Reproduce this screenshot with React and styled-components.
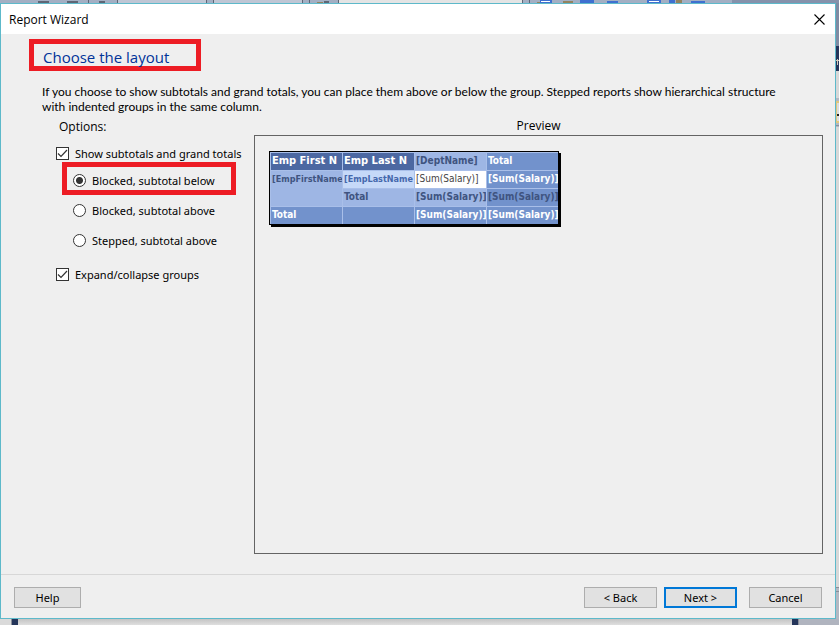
import React, { useState } from "react";
import styled, { createGlobalStyle, css } from "styled-components";

const GlobalStyle = createGlobalStyle`
  *, *::before, *::after { box-sizing: border-box; }
  body { margin: 0; background: #b4bac6; }
  body, button, input { font-family: "Noto Sans", "Open Sans", sans-serif; font-size: 11px; color: #000; }
`;

const Desktop = styled.div`
  display: grid;
  grid-template: 3px 1fr 6px / 1fr 3px;
  min-height: 100vh;
  overflow: hidden;
`;

const ToolbarEdge = styled.svg`
  display: block;
  grid-column: 1 / -1;
  width: 839px;
  height: 3px;
`;

const SideEdge = styled.svg`
  display: block;
  width: 3px;
  height: 616px;
`;

const BottomEdge = styled.div`
  grid-column: 1 / -1;
  display: flex;
  justify-content: space-between;
  padding: 0 40px 0 11px;
  background: linear-gradient(90deg, #dadada 11px, transparent 11px, transparent calc(100% - 40px), #b0b4bf calc(100% - 40px)),
    linear-gradient(#c4c4c4, #dfdfdf);
`;

const Post = styled.span`
  width: 7px;
  background: #25355a;
  border: 0 solid #8b8f99;
  border-width: ${(p) => (p.$right ? "0 1px 0 0" : "0 0 0 1px")};
`;

const Dialog = styled.main`
  display: flex;
  flex-direction: column;
  background: #efefef;
  border: 1px solid #5db9ca;
`;

const TitleBar = styled.header`
  display: flex;
  align-items: center;
  justify-content: space-between;
  height: 30px;
  padding: 0 8px;
  background: #fff;
`;

const WindowTitle = styled.span`
  font-family: "Open Sans", sans-serif;
  font-size: 12px;
`;

const CloseButton = styled.button`
  display: flex;
  padding: 2px;
  border: 0;
  background: none;
`;

const Body = styled.div`
  flex: 1;
  display: flex;
  flex-direction: column;
  padding: 5px 12px 20px 28px;
`;

const Heading = styled.h1`
  align-self: flex-start;
  width: 172px;
  height: 32px;
  margin: 0;
  padding: 0 9px;
  border: 5px solid #ed1c24;
  font-family: "Open Sans", sans-serif;
  font-size: 15px;
  font-weight: 400;
  line-height: 27px;
  color: #003399;
  white-space: nowrap;
`;

const Description = styled.p`
  margin: 13px 30px 0 13px;
  font-family: Lato, "Open Sans", sans-serif;
  font-size: 12px;
  line-height: 15px;
`;

const Columns = styled.div`
  flex: 1;
  display: grid;
  grid-template-columns: 225px 1fr;
`;

const Options = styled.fieldset`
  min-width: 0;
  margin: 0;
  padding: 0 0 0 27px;
  border: 0;
`;

const Legend = styled.legend`
  margin: 0;
  padding: 4px 0 0 3px;
  font-family: "Open Sans", sans-serif;
  font-size: 12px;
  line-height: 18px;
`;

const ChoiceRow = styled.label`
  position: relative;
  display: flex;
  align-items: center;
  gap: 6px;
  height: 30px;
  padding-left: ${(p) => (p.$nested ? "17px" : "0")};
  margin-top: ${(p) => (p.$spaced ? "4px" : "0")};
  white-space: nowrap;

  ${(p) =>
    p.$marked &&
    css`
      &::after {
        content: "";
        position: absolute;
        inset: -3px 18px 0 6px;
        border: 5px solid #ed1c24;
        pointer-events: none;
      }
    `}
`;

const FirstRow = styled(ChoiceRow)`
  height: 24px;
  margin-top: 5px;
`;

const CheckBox = styled.input`
  appearance: none;
  flex: none;
  width: 13px;
  height: 13px;
  margin: 0;
  border: 1px solid #333;
  background: #fff;

  &:checked {
    background: #fff
      url("data:image/svg+xml,%3Csvg xmlns='http://www.w3.org/2000/svg' viewBox='0 0 11 11'%3E%3Cpath d='M1 5.5 4 8.5 10 2' fill='none' stroke='%23333' stroke-width='1.2'/%3E%3C/svg%3E");
  }
`;

const Radio = styled.input`
  appearance: none;
  flex: none;
  width: 13px;
  height: 13px;
  margin: 0;
  border: 1px solid #333;
  border-radius: 50%;
  background: ${(p) => (p.checked ? "radial-gradient(circle, #333 3px, #fff 4px)" : "#fff")};
`;

const Preview = styled.section`
  display: flex;
  flex-direction: column;
`;

const PreviewLabel = styled.h2`
  margin: 0;
  padding-top: 3px;
  font-family: "Open Sans", sans-serif;
  font-size: 12px;
  font-weight: 400;
  line-height: 18px;
  text-align: center;
`;

const PreviewPane = styled.div`
  flex: 1;
  padding: 15px 14px;
  border: 1px solid #646464;
`;

const Report = styled.table`
  table-layout: fixed;
  width: 290px;
  border: 1px solid #000;
  border-spacing: 0;
  box-shadow: 2px 2px 0 #000;
  font-family: "DejaVu Sans Condensed", "DejaVu Sans", sans-serif;
  font-size: 10px;
`;

const tones = {
  header: ["#4c68a2", "#fff", "11px"],
  strong: ["#7292cc", "#fff", "10px"],
  total: ["#7292cc", "#3f5480", "10px"],
  field: ["#9eb6e4", "#3f5480", "9px"],
  group: ["#9eb6e4", "#3f5480", "10px"],
  light: ["#c6d9f8", "#4568ac", "9px"],
  plain: ["#fff", "#444", "10px"],
};

const Cell = styled.td`
  height: 18px;
  padding: 0 0 0 1px;
  overflow: hidden;
  vertical-align: top;
  text-align: left;
  white-space: nowrap;
  font-size: ${(p) => tones[p.$tone][2]};
  font-weight: ${(p) => (p.$tone === "plain" ? 400 : 700)};
  line-height: 16px;
  color: ${(p) => tones[p.$tone][1]};
  background: ${(p) => tones[p.$tone][0]};
  border: 0 solid #a9bfe9;
  border-width: 1px 0 0 1px;
`;

const Footer = styled.footer`
  display: flex;
  align-items: center;
  height: 44px;
  padding: 2px 13px 0;
  border-top: 1px solid #d7d7d7;
`;

const Actions = styled.div`
  display: flex;
  margin-left: auto;
  gap: 7px;
`;

const PushButton = styled.button`
  width: ${(p) => (p.$narrow ? "67px" : "73px")};
  height: 21px;
  margin-left: ${(p) => (p.$apart ? "5px" : "0")};
  padding: 0;
  border: ${(p) => (p.$primary ? "2px solid #0078d7" : "1px solid #adadad")};
  background: #e1e1e1;
`;

const rows = [
  [["Emp First N", "header"], ["Emp Last N", "header"], ["[DeptName]", "group"], ["Total", "strong"]],
  [["[EmpFirstName", "field", 2], ["[EmpLastName", "light"], ["[Sum(Salary)]", "plain"], ["[Sum(Salary)]", "strong"]],
  [["Total", "group"], ["[Sum(Salary)]", "group"], ["[Sum(Salary)]", "total"]],
  [["Total", "strong"], ["", "strong"], ["[Sum(Salary)]", "strong"], ["[Sum(Salary)]", "strong"]],
];

const layouts = ["Blocked, subtotal below", "Blocked, subtotal above", "Stepped, subtotal above"];

export default function App() {
  const [layout, setLayout] = useState(layouts[0]);

  return (
    <>
      <GlobalStyle />
      <Desktop>
        <ToolbarEdge viewBox="0 0 839 3" aria-hidden="true">
          <path fill="#a3afc3" d="M0 0h839v3H0z" />
          <path fill="#bfc6d4" d="M118 0h88v3h-88zM214 0h88v3h-88z" />
          <path fill="#e4e4e4" d="M339 0h183v3H339z" />
          <path fill="#5f6675" d="M38 1h11v2H38zM67 1h11v2H67zM88 0h1v3h-1zM99 1h6v2h-6zM117 0h1v3h-1zM206 0h1v3h-1zM213 0h1v3h-1zM302 0h1v3h-1zM309 0h1v3h-1zM324 1h5v2h-5zM338 0h1v3h-1zM522 0h1v3h-1zM529 0h1v3h-1z" />
          <path fill="#93835f" d="M317 2h6v1h-6zM537 2h5v1h-5zM563 1h10v2h-10zM676 0h6v3h-6z" />
          <path fill="#3f70d0" d="M540 0h12v3h-12zM580 0h14v3h-14zM607 1h11v2h-11zM647 0h14v3h-14zM669 0h6v3h-6zM691 1h14v2h-14z" />
          <path fill="#fff" d="M541 1h9v1h-9zM649 1h10v1h-10z" />
          <path fill="#8592ab" d="M732 0h107v3H732z" />
        </ToolbarEdge>

        <Dialog>
          <TitleBar>
            <WindowTitle>Report Wizard</WindowTitle>
            <CloseButton type="button" aria-label="Close">
              <svg width="11" height="11" viewBox="0 0 11 11">
                <path d="M.5.5l10 10M10.5.5l-10 10" stroke="#000" strokeWidth="1.1" />
              </svg>
            </CloseButton>
          </TitleBar>

          <Body>
            <Heading>Choose the layout</Heading>
            <Description>
              If you choose to show subtotals and grand totals, you can place them above or below the group. Stepped
              reports show hierarchical structure with indented groups in the same column.
            </Description>
            <Columns>
              <Options>
                <Legend>Options:</Legend>
                <FirstRow>
                  <CheckBox type="checkbox" defaultChecked />
                  Show subtotals and grand totals
                </FirstRow>
                {layouts.map((name, i) => (
                  <ChoiceRow key={name} $nested $marked={i === 0}>
                    <Radio type="radio" name="layout" checked={layout === name} onChange={() => setLayout(name)} />
                    {name}
                  </ChoiceRow>
                ))}
                <ChoiceRow $spaced>
                  <CheckBox type="checkbox" defaultChecked />
                  Expand/collapse groups
                </ChoiceRow>
              </Options>
              <Preview>
                <PreviewLabel>Preview</PreviewLabel>
                <PreviewPane>
                  <Report>
                    <tbody>
                      {rows.map((cells, r) => (
                        <tr key={r}>
                          {cells.map(([text, tone, span], c) => (
                            <Cell key={c} as={r === 0 ? "th" : "td"} $tone={tone} rowSpan={span}>
                              {text}
                            </Cell>
                          ))}
                        </tr>
                      ))}
                    </tbody>
                  </Report>
                </PreviewPane>
              </Preview>
            </Columns>
          </Body>

          <Footer>
            <PushButton type="button" $narrow>Help</PushButton>
            <Actions>
              <PushButton type="button">&lt; Back</PushButton>
              <PushButton type="button" $primary>Next &gt;</PushButton>
              <PushButton type="button" $apart>Cancel</PushButton>
            </Actions>
          </Footer>
        </Dialog>

        <SideEdge viewBox="0 0 3 616" aria-hidden="true">
          <path fill="#b4b8c2" d="M0 0h3v616H0z" />
          <path fill="#7f8ba3" d="M0 0h3v43H0z" />
          <path fill="#25355a" d="M0 43h3v25H0z" />
          <path fill="#d3c9b8" d="M1 56h1v6h-1zM0 57h3v1H0z" />
          <path fill="#d8d8d8" d="M0 68h3v27H0zM0 124h3v460H0z" />
          <path fill="#e2c67b" d="M0 98h3v22H0z" />
          <path fill="#dcdcdc" d="M1 100h2v18H1z" />
          <path fill="#222" d="M1 111h2v2H1z" />
          <path fill="#8b8f99" d="M0 122h3v1H0zM0 584h3v1H0zM0 588h3v1H0z" />
        </SideEdge>

        <BottomEdge aria-hidden="true">
          <Post />
          <Post $right />
        </BottomEdge>
      </Desktop>
    </>
  );
}
